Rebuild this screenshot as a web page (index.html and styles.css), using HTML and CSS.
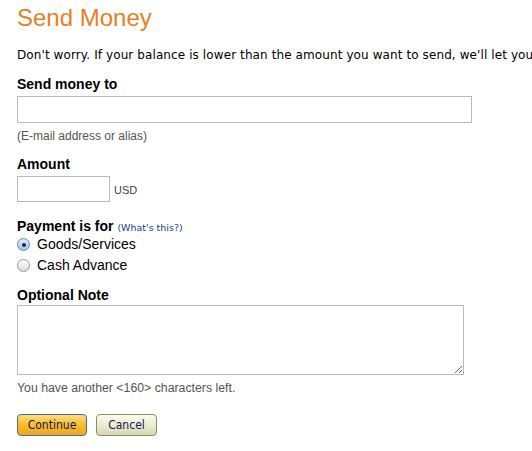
FILE: index.html
```html
<!DOCTYPE html>
<html>
<head>
<meta charset="utf-8">
<link rel="stylesheet" href="styles.css">
</head>
<body>
<div class="page">
  <h1 class="title">Send Money</h1>
  <p class="intro">Don't worry. If your balance is lower than the amount you want to send, we'll let you choose another funding source.</p>

  <div class="field">
    <label class="label">Send money to</label>
    <input class="text wide" type="text">
    <div class="hint">(E-mail address or alias)</div>
  </div>

  <div class="field">
    <label class="label">Amount</label>
    <div class="amount-row">
      <input class="text short" type="text">
      <span class="unit">USD</span>
    </div>
  </div>

  <div class="field">
    <div class="label payment">Payment is for <a class="whats" href="#">(What's this?)</a></div>
    <label class="radio-row"><span class="radio checked"><span class="dot"></span></span>Goods/Services</label>
    <label class="radio-row"><span class="radio"></span>Cash Advance</label>
  </div>

  <div class="field">
    <label class="label note-label">Optional Note</label>
    <textarea class="note"></textarea>
    <div class="hint2">You have another &lt;160&gt; characters left.</div>
  </div>

  <div class="buttons">
    <button class="btn continue">Continue</button>
    <button class="btn cancel">Cancel</button>
  </div>
</div>
</body>
</html>
```
FILE: styles.css
```css
html, body {
  margin: 0;
  padding: 0;
  background: #fff;
}
.page {
  padding: 4px 0 0 17px;
  font-family: "Liberation Sans", Arial, sans-serif;
  color: #000;
  white-space: nowrap;
  overflow: hidden;
  width: 515px;
}
.title {
  margin: 0;
  font-size: 24px;
  font-weight: normal;
  color: #e8801f;
  line-height: 28px;
}
.intro {
  margin: 15px 0 0;
  font-family: "DejaVu Sans", Verdana, sans-serif;
  font-size: 12px;
  line-height: 16px;
  letter-spacing: 0.1px;
}
.field {
  display: flex;
  flex-direction: column;
  align-items: flex-start;
}
.label {
  font-weight: bold;
  font-size: 14px;
  line-height: 16px;
  margin-top: 13px;
  margin-bottom: 4px;
}
.label.payment {
  margin-top: 16px;
  margin-bottom: -2px;
}
.label.note-label {
  margin-top: 11px;
  margin-bottom: 2px;
}
.whats {
  font-weight: normal;
  font-size: 9.5px;
  color: #1a3c99;
  text-decoration: none;
  font-family: "DejaVu Sans", Verdana, sans-serif;
}
.text {
  box-sizing: border-box;
  border: 1px solid #b9b9b9;
  height: 27px;
  margin: 0;
  padding: 2px 4px;
}
.wide { width: 455px; }
.short { width: 93px; height: 26px; }
.hint {
  font-size: 12px;
  color: #555;
  margin-top: 6px;
  line-height: 14px;
}
.amount-row {
  display: flex;
  align-items: center;
}
.unit {
  font-size: 11px;
  color: #444;
  margin-left: 4px;
  margin-top: 2px;
}
.radio-row {
  display: flex;
  align-items: center;
  font-size: 14px;
  line-height: 21px;
  height: 21px;
}
.radio {
  box-sizing: border-box;
  width: 13px;
  height: 13px;
  border-radius: 50%;
  border: 1px solid #9a9a9a;
  background: linear-gradient(#fdfdfd, #dcdcdc);
  margin-right: 7px;
  display: flex;
  align-items: center;
  justify-content: center;
}
.radio.checked {
  border-color: #6b86b5;
  background: linear-gradient(#dfeafb, #a9c2ea);
}
.dot {
  width: 4px;
  height: 4px;
  border-radius: 50%;
  background: #1b2f55;
}
.note {
  box-sizing: border-box;
  width: 447px;
  height: 70px;
  border: 1px solid #b9b9b9;
  margin: 0;
  resize: both;
}
.hint2 {
  font-size: 12.3px;
  color: #555;
  margin-top: 6px;
  line-height: 14px;
}
.buttons {
  display: flex;
  gap: 9px;
  margin-top: 19px;
}
.btn {
  height: 22px;
  border-radius: 4px;
  font-family: "DejaVu Sans Condensed", Tahoma, sans-serif;
  font-size: 12px;
  color: #15155e;
  padding: 0;
}
.continue {
  width: 70px;
  border: 1px solid #50679a;
  background: linear-gradient(#ffe07a, #f8bd2c 50%, #eea61a);
}
.cancel {
  width: 61px;
  border: 1px solid #8d8d62;
  background: linear-gradient(#fbfbef, #e9e8cb 60%, #d8d6ad);
}
```
